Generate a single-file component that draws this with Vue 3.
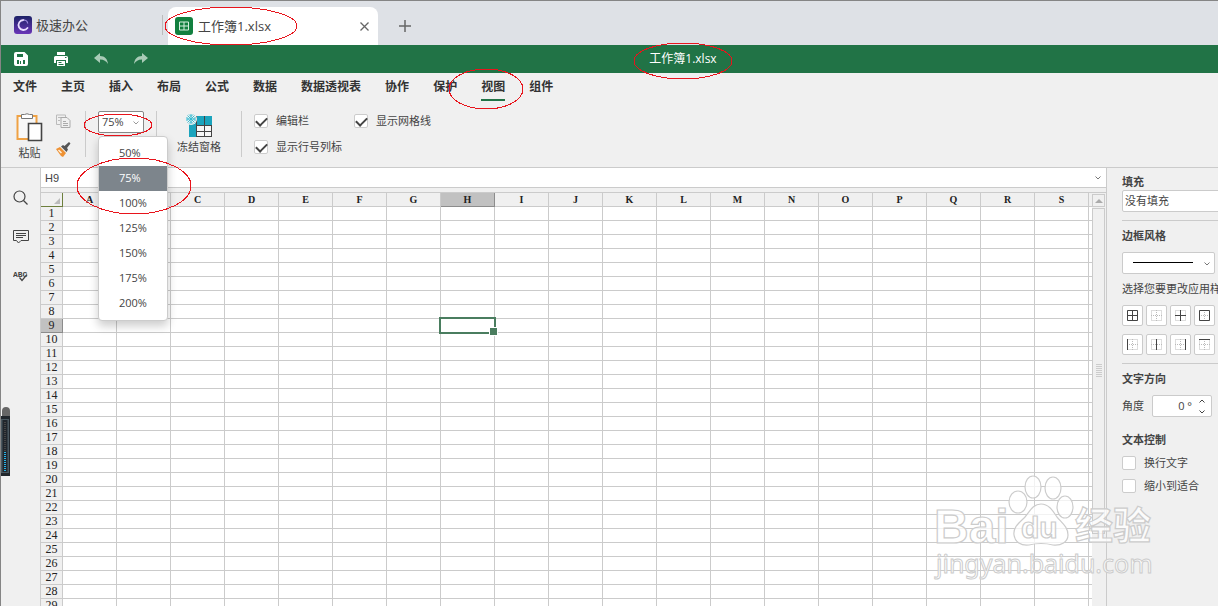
<script setup>
import { ref } from 'vue';

const menus = ['文件', '主页', '插入', '布局', '公式', '数据', '数据透视表', '协作', '保护', '视图', '组件'];
const activeMenu = ref('视图');

const zoomLevels = [50, 75, 100, 125, 150, 175, 200];
const zoom = ref(75);

const showFormulaBar = ref(true);
const showHeadings = ref(true);
const showGridlines = ref(true);

const columns = 'ABCDEFGHIJKLMNOPQRS'.split('');
const rowCount = 29;
const selected = ref({ col: 'H', row: 9 });

const lineStyle = ref('solid');
const angle = ref('0 °');
const wrapText = ref(false);
const shrinkText = ref(false);

// d: solid strokes, the dotted frame is drawn under each of them
const borders = [
  { name: '所有框线', d: 'M1.5 1.5h10v10h-10zM6.5 1v11M1 6.5h11' },
  { name: '无框线', d: '' },
  { name: '内部框线', d: 'M6.5 1v11M1 6.5h11' },
  { name: '外部框线', d: 'M1.5 1.5h10v10h-10z' },
  { name: '左框线', d: 'M1.5 1v11' },
  { name: '内部竖线', d: 'M6.5 1v11' },
  { name: '右框线', d: 'M11.5 1v11' },
  { name: '上框线', d: 'M1 1.5h11' }
];

function isSelected(col, row) {
  return selected.value.col === col && selected.value.row === row;
}

function selectCell(col, row) {
  selected.value = { col, row };
}
</script>

<template>
  <div class="app">
    <header class="tabs">
      <div class="home-tab">
        <svg width="18" height="18" viewBox="0 0 18 18">
          <defs>
            <linearGradient id="logo" x1="0" y1="0" x2="0" y2="1">
              <stop offset="0" stop-color="#1c2166" />
              <stop offset="1" stop-color="#6a36b8" />
            </linearGradient>
          </defs>
          <rect width="18" height="18" rx="3" fill="url(#logo)" />
          <path d="M9.500 4a5 5 0 1 0 4 8" fill="none" stroke="#e8dcff" stroke-width="1.800" stroke-linecap="round" />
          <path d="M9.500 4c2.500 0 4 1.500 4.200 3.500" fill="none" stroke="#9c86dc" stroke-width="1.200" />
        </svg>
        <span>极速办公</span>
      </div>
      <div class="file-tab">
        <svg width="18" height="18" viewBox="0 0 18 18">
          <rect width="18" height="18" rx="3" fill="#12803f" />
          <path d="M4.500 5h9v8h-9zM9 5v8M4.500 9h9" fill="none" stroke="#d5f0df" />
        </svg>
        <span>工作簿1.xlsx</span>
        <button type="button" class="close" aria-label="关闭">
          <svg width="9" height="9" viewBox="0 0 9 9"><path d="M.5.5l8 8M8.5.5l-8 8" fill="none" stroke="#666" stroke-width="1.300" /></svg>
        </button>
      </div>
      <button type="button" class="new-tab" aria-label="新建">
        <svg width="12" height="12" viewBox="0 0 12 12"><path d="M6 0v12M0 6h12" stroke="#666" stroke-width="1.500" /></svg>
      </button>
    </header>

    <div class="quick">
      <button type="button" aria-label="保存">
        <svg width="14" height="14" viewBox="0 0 14 14">
          <path fill-rule="evenodd" d="M2 0h8.500L14 3.500V12a2 2 0 0 1-2 2H2a2 2 0 0 1-2-2V2a2 2 0 0 1 2-2zM3 2v3h6V2zM3 8v4h8V8z" fill="#fff" />
          <path d="M5 8h4v4H5z" fill="#fff" />
          <path d="M6 9h1v3H6z" fill="#217346" />
        </svg>
      </button>
      <button type="button" aria-label="打印">
        <svg width="14" height="14" viewBox="0 0 14 14">
          <path d="M3 0h8v3h-8zM1.500 4h11A1.500 1.500 0 0 1 14 5.500V11h-2V8h-10v3h-2V5.500A1.500 1.500 0 0 1 1.500 4zM3 9h8v5h-8z" fill="#fff" />
          <path d="M4.500 10.500h3M4.500 12.500h5M11 5.500h1.500" stroke="#217346" />
        </svg>
      </button>
      <button type="button" aria-label="撤销">
        <svg width="14" height="12" viewBox="0 0 14 12"><path d="M0 5l6-5v3c5 0 7.500 3 8 8-2-3-4-4.500-8-4.500V10z" fill="#a9cbb7" /></svg>
      </button>
      <button type="button" aria-label="恢复">
        <svg width="14" height="12" viewBox="0 0 14 12"><path d="M14 5L8 0v3C3 3 .5 6 0 11c2-3 4-4.500 8-4.500V10z" fill="#a9cbb7" /></svg>
      </button>
      <h1>工作簿1.xlsx</h1>
    </div>

    <nav class="menu">
      <button v-for="item in menus" :key="item" type="button" :class="{ active: item === activeMenu }" @click="activeMenu = item">{{ item }}</button>
    </nav>

    <div class="toolbar">
      <button type="button" class="tool paste">
        <svg width="27" height="30" viewBox="0 0 27 30">
          <path d="M1.500 3h19v23h-19z" fill="#f8f8f8" stroke="#efa245" stroke-width="2" />
          <path d="M5.500 5.500v-4h3q2.500-1.500 5 0h3v4z" fill="#fff" stroke="#777" />
          <path d="M12.500 10.500h13v17h-13z" fill="#fff" stroke="#444" stroke-width="1.600" />
        </svg>
        粘贴
      </button>
      <div class="small-tools">
        <button type="button" aria-label="复制">
          <svg width="15" height="15" viewBox="0 0 15 15">
            <path d="M9.500 3V1h-9v9.500H4M2 3.500h3M2 6.500h2" fill="none" stroke="#bbb" />
            <path d="M5 3.500h6l3 3v7H5zM7 7.500h3M7 9.500h5M7 11.500h5" fill="none" stroke="#aaa" />
          </svg>
        </button>
        <button type="button" aria-label="格式刷">
          <svg width="15" height="15" viewBox="0 0 15 15">
            <path d="M0 7l4-2 6 6-3 4-2-1z" fill="#ee9133" />
            <path d="M2.500 8l3 3" stroke="#fff0dc" stroke-width="1.500" />
            <path d="M5 4.500l2-1.500 1.500 1L13 0l1.500 1.500L11 6l1 1.500-1.500 2.500z" fill="#555" />
          </svg>
        </button>
      </div>
      <div class="zoom">
        <select v-model="zoom" aria-label="缩放">
          <option v-for="level in zoomLevels" :key="level" :value="level">{{ level }}%</option>
        </select>
        <svg class="arrow" width="6" height="4" viewBox="0 0 6 4"><path d="M.5.5L3 3 5.500.5" fill="none" stroke="#999" /></svg>
        <ul class="zoom-list">
          <li v-for="level in zoomLevels" :key="level">
            <button type="button" :class="{ active: level === zoom }" @click="zoom = level">{{ level }}%</button>
          </li>
        </ul>
      </div>
      <button type="button" class="tool freeze">
        <svg width="27" height="24" viewBox="0 0 27 24">
          <path d="M3 2h23v21H3z" fill="#f7f7f7" />
          <path d="M3 2h23v9H3zM3 11h7v12H3z" fill="#1ba4bd" />
          <path d="M10.500 11v12M18.500 11v12M10 11.500h16M10 17.500h16M25.500 11v12M10 22.500h16M10.500 2v9M18.500 2v9" fill="none" stroke="#444" />
          <circle cx="5" cy="5" r="6" fill="#f0f0f0" />
          <path d="M5 0v10M0 5h10M1.500 1.500l7 7M8.500 1.500l-7 7M3 .5l2 2 2-2M3 9.500l2-2 2 2M.5 3l2 2-2 2M9.500 3l-2 2 2 2" fill="none" stroke="#35bcd3" />
        </svg>
        冻结窗格
      </button>
      <div class="checks">
        <label><input v-model="showFormulaBar" type="checkbox" />编辑栏</label>
        <label><input v-model="showGridlines" type="checkbox" />显示网格线</label>
        <label><input v-model="showHeadings" type="checkbox" />显示行号列标</label>
      </div>
    </div>

    <main class="body">
      <aside class="rail">
        <button type="button" aria-label="查找">
          <svg width="16" height="16" viewBox="0 0 16 16"><circle cx="6.500" cy="6.500" r="5.500" fill="none" stroke="#444" stroke-width="1.200" /><path d="M10.500 10.500l4 4" stroke="#444" stroke-width="1.200" /></svg>
        </button>
        <button type="button" aria-label="批注">
          <svg width="16" height="16" viewBox="0 0 16 16"><path d="M.5 1.500h15v10H8l-2.500 2.500-2-2.500h-3zM3 4.500h10M3 6.500h10M3 8.500h7" fill="none" stroke="#444" /></svg>
        </button>
        <button type="button" aria-label="拼写检查">
          <svg width="16" height="16" viewBox="0 0 16 16">
            <text x="0" y="9" font-size="8" font-weight="700" font-family="Liberation Mono, monospace" fill="#444">ABC</text>
            <path d="M6.500 9.500l2.500 3 5-6" fill="none" stroke="#444" stroke-width="1.300" />
          </svg>
        </button>
      </aside>

      <section class="sheet">
        <div class="formula">
          <input type="text" class="cell-name" aria-label="单元格" :value="selected.col + selected.row" />
          <input type="text" class="cell-value" aria-label="编辑栏" />
          <svg width="6" height="4" viewBox="0 0 6 4"><path d="M.5.5L3 3 5.500.5" fill="none" stroke="#777" /></svg>
        </div>
        <div class="grid-wrap">
          <div class="grid">
            <table>
              <colgroup>
                <col class="row-col" />
                <col v-for="col in columns" :key="col" class="data-col" />
                <col />
              </colgroup>
              <thead>
                <tr>
                  <th class="corner"><svg width="6" height="6" viewBox="0 0 6 6"><path d="M6 0v6H0z" fill="#bbb" /></svg></th>
                  <th v-for="col in columns" :key="col" :class="{ current: col === selected.col }">{{ col }}</th>
                  <th></th>
                </tr>
              </thead>
              <tbody>
                <tr v-for="row in rowCount" :key="row">
                  <th :class="{ current: row === selected.row }">{{ row }}</th>
                  <td v-for="col in columns" :key="col" :class="{ picked: isSelected(col, row) }" @click="selectCell(col, row)"></td>
                  <td class="filler"></td>
                </tr>
              </tbody>
            </table>
          </div>
          <div class="scroll">
            <button type="button" aria-label="向上滚动">
              <svg width="8" height="4" viewBox="0 0 8 4"><path d="M4 0l4 4H0z" fill="#aaa" /></svg>
            </button>
            <div class="thumb">
              <svg width="6" height="14" viewBox="0 0 6 14"><path d="M0 .5h6M0 2.500h6M0 4.500h6M0 6.500h6M0 8.500h6M0 10.500h6M0 12.500h6" stroke="#ccc" /></svg>
            </div>
          </div>
        </div>
      </section>

      <aside class="panel">
        <div class="block">
          <label class="title" for="fill">填充</label>
          <select id="fill" class="field fill">
            <option>没有填充</option>
          </select>
        </div>
        <div class="block">
          <label class="title" for="line">边框风格</label>
          <div class="line-select">
            <select id="line" v-model="lineStyle" class="field">
              <option value="solid"></option>
            </select>
            <svg class="line" width="60" height="2" viewBox="0 0 60 2"><path d="M0 .5h60" stroke="#000" /></svg>
            <svg class="arrow" width="6" height="4" viewBox="0 0 6 4"><path d="M.5.5L3 3 5.500.5" fill="none" stroke="#777" /></svg>
          </div>
          <p>选择您要更改应用样式的边框</p>
          <div class="borders">
            <button v-for="border in borders" :key="border.name" type="button" :aria-label="border.name">
              <svg width="13" height="13" viewBox="0 0 13 13">
                <path d="M1.500 1.500h10v10h-10zM6.500 1v11M1 6.500h11" fill="none" stroke="#bbb" stroke-dasharray="1 1" />
                <path :d="border.d" fill="none" stroke="#444" />
              </svg>
            </button>
          </div>
        </div>
        <div class="block">
          <h2 class="title">文字方向</h2>
          <div class="angle">
            <label for="angle">角度</label>
            <input id="angle" v-model="angle" type="text" class="field" />
            <svg width="6" height="15" viewBox="0 0 6 15"><path d="M.5 3.500L3 1l2.500 2.500M.5 11.500L3 14l2.500-2.500" fill="none" stroke="#444" /></svg>
          </div>
          <h2 class="title">文本控制</h2>
          <div class="text-checks">
            <label><input v-model="wrapText" type="checkbox" />换行文字</label>
            <label><input v-model="shrinkText" type="checkbox" />缩小到适合</label>
          </div>
        </div>
      </aside>
    </main>

    <!-- side meter -->
    <svg class="meter" width="10" height="70" viewBox="0 0 10 70">
      <path d="M2 10V4a4 4 0 0 1 8 0v6z" fill="#666" />
      <path d="M0 9h10v60H0z" fill="#20262c" />
      <path d="M1 12h8v54H1z" fill="#4a5860" />
      <path d="M2.500 13h5v52h-5z" fill="#20262c" />
      <path d="M5 15v30" stroke="#454545" stroke-width="2" stroke-dasharray="1 1" />
      <path d="M5 45v20" stroke="#29b2e6" stroke-width="2" stroke-dasharray="1 1" />
    </svg>

    <!-- hand drawn marks -->
    <svg class="marks" width="760" height="220" viewBox="0 0 760 220">
      <g fill="none" stroke="#e8141c" shape-rendering="crispEdges">
        <ellipse cx="231" cy="26" rx="66" ry="19" />
        <ellipse cx="683" cy="61" rx="49" ry="18" />
        <ellipse cx="486" cy="89" rx="37" ry="20" />
        <ellipse cx="118" cy="125" rx="34" ry="11" />
        <ellipse cx="134" cy="186" rx="57" ry="28" />
      </g>
    </svg>

    <svg class="watermark" width="222" height="110" viewBox="0 0 222 110">
      <g fill="#fff" fill-opacity=".75" stroke="#ccc" stroke-width="1.200">
        <ellipse cx="84" cy="24" rx="9" ry="11" />
        <ellipse cx="99" cy="9" rx="8" ry="11" />
        <ellipse cx="119" cy="10" rx="8" ry="11" />
        <ellipse cx="131" cy="29" rx="8" ry="11" />
        <path d="M107 26c-8 0-11 7-16 13-6 6-12 10-11 18 1 7 7 11 15 10 8-2 16-2 24 0 8 1 15-3 15-10 0-8-6-12-11-18-4-6-8-13-16-13z" />
        <g font-weight="700" font-family="Liberation Sans, Noto Sans CJK SC, sans-serif" font-size="48">
          <text x="0" y="65">Bai</text>
          <text x="87" y="60" font-size="30">du</text>
          <text x="141" y="61" font-size="38" font-family="Noto Sans CJK SC, sans-serif">经验</text>
        </g>
        <text x="2" y="95" font-size="25" stroke-width="1" font-family="Noto Sans, sans-serif">jingyan.baidu.com</text>
      </g>
    </svg>
  </div>
</template>

<style>
body {
  margin: 0;
  overflow: hidden;
}
</style>

<style scoped>
* {
  box-sizing: border-box;
}

.app {
  position: relative;
  display: flex;
  flex-direction: column;
  height: 100vh;
  overflow: hidden;
  border-top: 1px solid #858585;
  border-left: 1px solid #858585;
  background: #f0f0f0;
  color: #444;
  font: 11px/16px "Open Sans", "Noto Sans CJK SC", sans-serif;
}

button,
input,
select {
  margin: 0;
  padding: 0;
  border: 0;
  border-radius: 0;
  outline: none;
  background: none;
  color: inherit;
  font: inherit;
}

select {
  appearance: none;
}

svg {
  display: block;
  flex: none;
}

.tabs {
  display: flex;
  flex: none;
  align-items: center;
  height: 44px;
  padding-left: 13px;
  background: #dee1e6;
  font-family: "Open Sans", "Noto Sans CJK SC", sans-serif;
  font-size: 13px;
}

.home-tab {
  display: flex;
  align-items: center;
  gap: 4px;
  width: 149px;
  height: 20px;
  margin-top: 4px;
  border-right: 1px solid #bbb;
}

.file-tab {
  display: flex;
  align-items: center;
  align-self: flex-end;
  gap: 5px;
  width: 210px;
  height: 38px;
  margin-left: 5px;
  padding: 0 9px 0 7px;
  border-radius: 8px 8px 0 0;
  background: #fff;
}

.close {
  margin-left: auto;
}

.new-tab {
  margin: 6px 0 0 21px;
}

.quick {
  display: flex;
  flex: none;
  align-items: center;
  gap: 26px;
  height: 28px;
  padding-left: 13px;
  background: #217346;
  color: #fff;
}

.quick h1 {
  flex: 1;
  margin: 0 0 0 -26px;
  text-align: center;
  font: 12px/16px "Open Sans", "Noto Sans CJK SC", sans-serif;
}

.menu {
  display: flex;
  flex: none;
  gap: 24px;
  padding: 4px 12px 0;
  color: #333;
  font: 700 12px/18px "Noto Sans CJK SC", sans-serif;
}

.menu button {
  height: 24px;
  padding-bottom: 6px;
  border-bottom: 2px solid transparent;
}

.menu .active {
  border-color: #217346;
}

.toolbar {
  display: flex;
  flex: none;
  height: 67px;
  padding: 10px 0 10px 15px;
  border-bottom: 1px solid #cbcbcb;
}

.tool {
  display: flex;
  flex-direction: column;
  align-items: center;
}

.paste {
  gap: 2px;
  padding-top: 2px;
}

.small-tools {
  display: flex;
  flex-direction: column;
  justify-content: space-between;
  margin-left: 13px;
  padding: 3px 14px 0 0;
  border-right: 1px solid #cbcbcb;
}

.zoom {
  position: relative;
  width: 71px;
  padding-left: 12px;
  border-right: 1px solid #cbcbcb;
}

.zoom select {
  width: 46px;
  height: 22px;
  padding-left: 3px;
  border: 1px solid #888;
  border-radius: 2px;
  background: #fff;
}

.zoom .arrow {
  position: absolute;
  top: 10px;
  left: 47px;
}

.zoom-list {
  position: absolute;
  z-index: 2;
  top: 25px;
  left: 12px;
  width: 70px;
  margin: 0;
  padding: 4px 0;
  border: 1px solid #ccc;
  border-radius: 4px;
  background: #fff;
  box-shadow: 0 5px 10px rgba(0, 0, 0, 0.2);
  list-style: none;
}

.zoom-list button {
  display: block;
  width: 100%;
  height: 25px;
  padding: 0 0 2px 20px;
  text-align: left;
}

.zoom-list .active {
  background: #7d858c;
  color: #fff;
}

.freeze {
  gap: 1px;
  padding: 3px 20px 0;
  border-right: 1px solid #cbcbcb;
}

.checks {
  display: grid;
  grid-template-columns: 100px 100px;
  align-content: start;
  gap: 10px 0;
  padding: 2px 0 0 12px;
  white-space: nowrap;
}

.checks label,
.text-checks label {
  display: flex;
  align-items: center;
  gap: 8px;
}

input[type="checkbox"] {
  display: flex;
  align-items: flex-start;
  justify-content: center;
  width: 14px;
  height: 14px;
  appearance: none;
  border: 1px solid #ccc;
  border-radius: 2px;
  background: #fff;
}

input[type="checkbox"]:checked::after {
  width: 5px;
  height: 9px;
  border: solid #444;
  border-width: 0 2px 2px 0;
  content: "";
  transform: rotate(45deg);
}

.body {
  display: grid;
  flex: 1;
  grid-template-columns: 40px minmax(0, 1fr) 112px;
  min-height: 0;
}

.rail {
  display: flex;
  flex-direction: column;
  align-items: center;
  gap: 23px;
  padding-top: 22px;
  border-right: 1px solid #cbcbcb;
}

.sheet {
  display: flex;
  flex-direction: column;
  min-width: 0;
  min-height: 0;
}

.formula {
  display: flex;
  flex: none;
  align-items: center;
  height: 20px;
  margin-bottom: 4px;
  padding: 0 5px 0 4px;
  border-bottom: 1px solid #cbcbcb;
  background: #fff;
  font-family: "Liberation Sans", sans-serif;
}

.cell-name {
  width: 80px;
}

.cell-value {
  flex: 1;
}

.grid-wrap {
  display: flex;
  flex: 1;
  min-height: 0;
  border-top: 1px solid #cbcbcb;
}

.grid {
  flex: 1;
  min-width: 0;
  overflow: hidden;
  background: #fff;
}

table {
  width: 100%;
  border-spacing: 0;
  table-layout: fixed;
}

.row-col {
  width: 22px;
}

.data-col {
  width: 54px;
}

th,
td {
  height: 14px;
  padding: 0;
  border: solid #cbcbcb;
  border-width: 0 1px 1px 0;
  font: 12px/13px "Liberation Serif", serif;
}

th {
  background: #f0f0f0;
  color: #222;
  text-align: center;
}

thead th {
  font-size: 10px;
  font-weight: 700;
}

thead th:last-child,
.filler {
  border-right: 0;
}

.corner {
  border-color: #6d7f3d;
}

.corner svg {
  margin: 3px 2px 0 auto;
}

.current {
  border-color: #8c8c8c;
  background: #c1c1c1;
}

.picked {
  position: relative;
}

.picked::before {
  position: absolute;
  z-index: 1;
  inset: -2px;
  border: 2px solid #4a7d5f;
  content: "";
}

.picked::after {
  position: absolute;
  z-index: 1;
  right: -4px;
  bottom: -4px;
  width: 7px;
  height: 7px;
  border: 1px solid #fff;
  background: #4a7d5f;
  content: "";
}

.scroll {
  display: flex;
  flex: none;
  flex-direction: column;
  gap: 1px;
  width: 14px;
  padding: 1px 1px 0 0;
}

.scroll button {
  display: flex;
  flex: none;
  align-items: center;
  justify-content: center;
  height: 13px;
  border: 1px solid #cbcbcb;
}

.thumb {
  display: flex;
  flex: 1;
  align-items: center;
  justify-content: center;
  max-height: 326px;
  border: 1px solid #cbcbcb;
}

.panel {
  overflow: hidden;
  padding: 6px 0 0 15px;
  border-left: 1px solid #cbcbcb;
  white-space: nowrap;
}

.title {
  display: block;
  margin: 0;
  font-size: 11px;
  font-weight: 700;
  line-height: 16px;
}

.field {
  height: 22px;
  padding-left: 2px;
  border: 1px solid #cbcbcb;
  border-radius: 2px;
  background: #fff;
}

.fill {
  display: block;
  width: 140px;
}

.block + .block {
  margin-top: 8px;
  padding-top: 7px;
  border-top: 1px solid #cbcbcb;
}

.line-select {
  position: relative;
  width: 93px;
  margin-top: 8px;
}

.line-select .field {
  display: block;
  width: 100%;
}

.line-select .line {
  position: absolute;
  top: 10px;
  left: 11px;
}

.line-select .arrow {
  position: absolute;
  top: 10px;
  right: 5px;
}

.panel p {
  margin: 7px 0 8px;
}

.borders {
  display: grid;
  grid-template-columns: repeat(4, 21px);
  gap: 8px 3px;
}

.borders button {
  display: flex;
  align-items: center;
  justify-content: center;
  height: 21px;
  border: 1px solid #cbcbcb;
  border-radius: 2px;
  background: #fff;
}

.angle {
  display: flex;
  align-items: center;
  gap: 8px;
  margin: 8px 0 15px;
}

.angle .field {
  width: 60px;
  padding: 0 19px 2px 0;
  text-align: right;
}

.angle svg {
  margin-left: -21px;
}

.text-checks {
  display: grid;
  gap: 7px;
  margin-top: 7px;
}

.meter {
  position: absolute;
  top: 406px;
  left: -1px;
}

.marks {
  position: absolute;
  z-index: 3;
  top: -1px;
  left: -1px;
  pointer-events: none;
}

.watermark {
  position: absolute;
  right: 62px;
  bottom: 18px;
  overflow: visible;
  pointer-events: none;
}
</style>
